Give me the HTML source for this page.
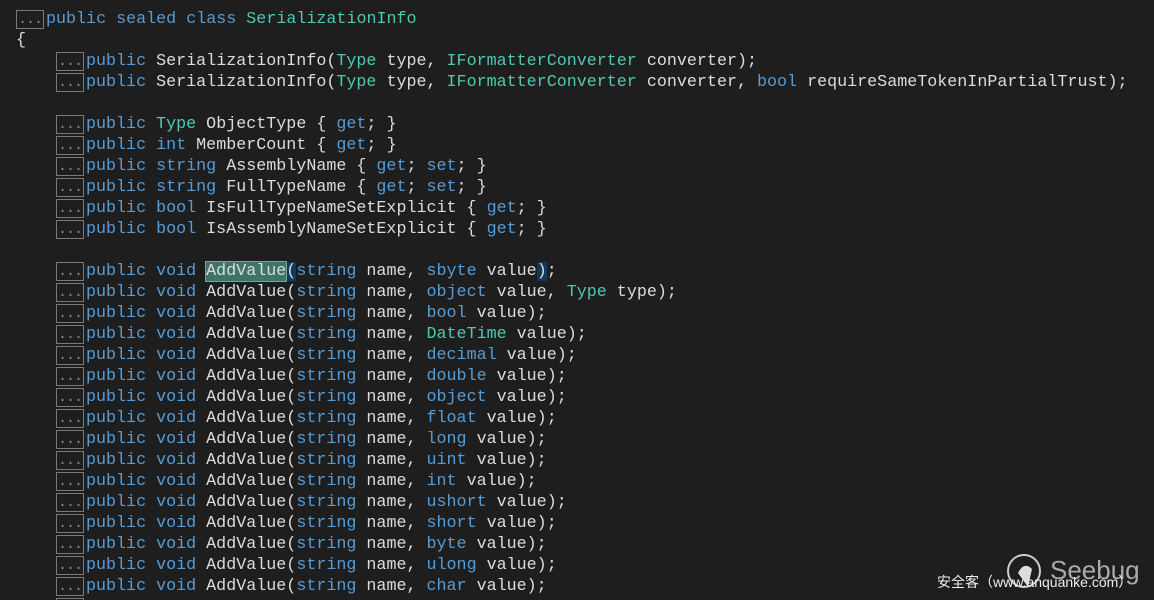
<!DOCTYPE html>
<html><head><meta charset="utf-8"><style>
html,body{margin:0;padding:0;background:#1e1e1e;width:1154px;height:600px;overflow:hidden;position:relative}
.c{position:absolute;left:0;top:0;width:1154px;height:600px;overflow:hidden;font-family:"Liberation Mono",monospace;font-size:16.7px;color:#dcdcdc;white-space:pre}
.l{position:absolute;height:21px;line-height:21px}
.k{color:#569cd6}.t{color:#4ec9b0}
.b{display:inline-block;width:28px;height:19px;line-height:17px;border:1px solid #7a7a7a;color:#888;box-sizing:border-box;vertical-align:top;margin-top:1px;margin-right:2px;text-align:center;letter-spacing:-1px;font-size:15px}
.h{background:#3d7566;outline:1px solid #6aa;}
.p{background:#0e3a5f}
.wm{position:absolute;font-family:"Liberation Sans","Noto Sans CJK SC",sans-serif;color:#eee;white-space:nowrap}
</style></head><body>
<div class="c">
<div class="l" style="left:16px;top:9px"><span class="b">...</span><span class="k">public sealed class</span> <span class="t">SerializationInfo</span></div>
<div class="l" style="left:16px;top:30px">{</div>
<div class="l" style="left:56px;top:51px"><span class="b">...</span><span class="k">public</span> SerializationInfo(<span class="t">Type</span> type, <span class="t">IFormatterConverter</span> converter);</div>
<div class="l" style="left:56px;top:72px"><span class="b">...</span><span class="k">public</span> SerializationInfo(<span class="t">Type</span> type, <span class="t">IFormatterConverter</span> converter, <span class="k">bool</span> requireSameTokenInPartialTrust);</div>
<div class="l" style="left:56px;top:114px"><span class="b">...</span><span class="k">public</span> <span class="t">Type</span> ObjectType { <span class="k">get</span>; }</div>
<div class="l" style="left:56px;top:135px"><span class="b">...</span><span class="k">public int</span> MemberCount { <span class="k">get</span>; }</div>
<div class="l" style="left:56px;top:156px"><span class="b">...</span><span class="k">public string</span> AssemblyName { <span class="k">get</span>; <span class="k">set</span>; }</div>
<div class="l" style="left:56px;top:177px"><span class="b">...</span><span class="k">public string</span> FullTypeName { <span class="k">get</span>; <span class="k">set</span>; }</div>
<div class="l" style="left:56px;top:198px"><span class="b">...</span><span class="k">public bool</span> IsFullTypeNameSetExplicit { <span class="k">get</span>; }</div>
<div class="l" style="left:56px;top:219px"><span class="b">...</span><span class="k">public bool</span> IsAssemblyNameSetExplicit { <span class="k">get</span>; }</div>
<div class="l" style="left:56px;top:261px"><span class="b">...</span><span class="k">public void</span> <span class="h">AddValue</span><span class="p">(</span><span class="k">string</span> name, <span class="k">sbyte</span> value<span class="p">)</span>;</div>
<div class="l" style="left:56px;top:282px"><span class="b">...</span><span class="k">public void</span> AddValue(<span class="k">string</span> name, <span class="k">object</span> value, <span class="t">Type</span> type);</div>
<div class="l" style="left:56px;top:303px"><span class="b">...</span><span class="k">public void</span> AddValue(<span class="k">string</span> name, <span class="k">bool</span> value);</div>
<div class="l" style="left:56px;top:324px"><span class="b">...</span><span class="k">public void</span> AddValue(<span class="k">string</span> name, <span class="t">DateTime</span> value);</div>
<div class="l" style="left:56px;top:345px"><span class="b">...</span><span class="k">public void</span> AddValue(<span class="k">string</span> name, <span class="k">decimal</span> value);</div>
<div class="l" style="left:56px;top:366px"><span class="b">...</span><span class="k">public void</span> AddValue(<span class="k">string</span> name, <span class="k">double</span> value);</div>
<div class="l" style="left:56px;top:387px"><span class="b">...</span><span class="k">public void</span> AddValue(<span class="k">string</span> name, <span class="k">object</span> value);</div>
<div class="l" style="left:56px;top:408px"><span class="b">...</span><span class="k">public void</span> AddValue(<span class="k">string</span> name, <span class="k">float</span> value);</div>
<div class="l" style="left:56px;top:429px"><span class="b">...</span><span class="k">public void</span> AddValue(<span class="k">string</span> name, <span class="k">long</span> value);</div>
<div class="l" style="left:56px;top:450px"><span class="b">...</span><span class="k">public void</span> AddValue(<span class="k">string</span> name, <span class="k">uint</span> value);</div>
<div class="l" style="left:56px;top:471px"><span class="b">...</span><span class="k">public void</span> AddValue(<span class="k">string</span> name, <span class="k">int</span> value);</div>
<div class="l" style="left:56px;top:492px"><span class="b">...</span><span class="k">public void</span> AddValue(<span class="k">string</span> name, <span class="k">ushort</span> value);</div>
<div class="l" style="left:56px;top:513px"><span class="b">...</span><span class="k">public void</span> AddValue(<span class="k">string</span> name, <span class="k">short</span> value);</div>
<div class="l" style="left:56px;top:534px"><span class="b">...</span><span class="k">public void</span> AddValue(<span class="k">string</span> name, <span class="k">byte</span> value);</div>
<div class="l" style="left:56px;top:555px"><span class="b">...</span><span class="k">public void</span> AddValue(<span class="k">string</span> name, <span class="k">ulong</span> value);</div>
<div class="l" style="left:56px;top:576px"><span class="b">...</span><span class="k">public void</span> AddValue(<span class="k">string</span> name, <span class="k">char</span> value);</div>
<div class="l" style="left:56px;top:597px"><span class="b">...</span></div>
</div>
<svg style="position:absolute;left:1006px;top:553px" width="36" height="36" viewBox="0 0 36 36"><circle cx="18" cy="18" r="16" fill="none" stroke="#ccc" stroke-width="2"/><path d="M12 20 Q18 8 26 16 L22 34 Z" fill="#ddd"/></svg>
<div class="wm" style="left:1050px;top:555px;font-size:26px;color:#aaa">Seebug</div>
<div class="wm" style="left:937px;top:572px;font-size:14px">安全客（www.anquanke.com）</div>
</body></html>
